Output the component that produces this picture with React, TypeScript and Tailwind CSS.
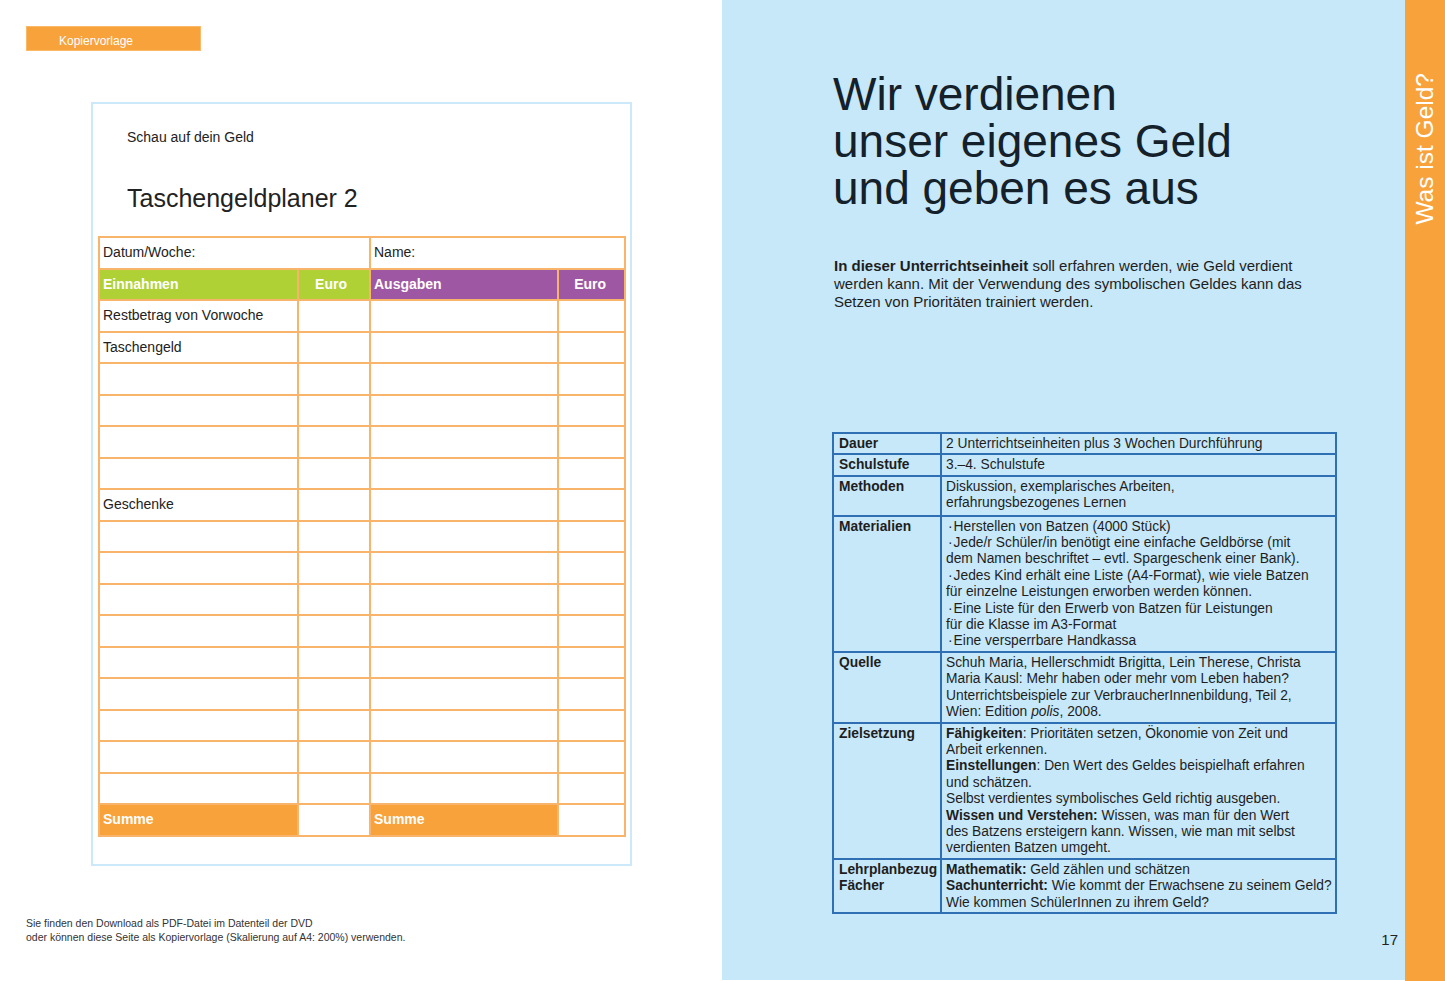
import React from "react";

const font = { fontFamily: '"Liberation Sans", Arial, sans-serif' };

function PlannerTable() {
  const rows: { label?: string }[] = [
    { label: "Restbetrag von Vorwoche" },
    { label: "Taschengeld" },
    {},
    {},
    {},
    {},
    { label: "Geschenke" },
    {},
    {},
    {},
    {},
    {},
    {},
    {},
    {},
    {},
  ];
  const td = "border-2 border-[#f9b46c] px-[3px] text-[14px] text-[#222] align-middle";
  return (
    <table className="border-collapse table-fixed ml-[5px] w-[526px]">
      <colgroup>
        <col className="w-[199px]" />
        <col className="w-[72px]" />
        <col className="w-[188px]" />
        <col className="w-[67px]" />
      </colgroup>
      <tbody>
        <tr className="h-[31.5px]">
          <td colSpan={2} className={td}>Datum/Woche:</td>
          <td colSpan={2} className={td}>Name:</td>
        </tr>
        <tr className="h-[31.5px]">
          <td className={`${td} bg-[#afd136] text-white font-bold`}>Einnahmen</td>
          <td className={`${td} bg-[#afd136] text-white font-bold text-right pr-[22px]`}>Euro</td>
          <td className={`${td} bg-[#9e58a3] text-white font-bold`}>Ausgaben</td>
          <td className={`${td} bg-[#9e58a3] text-white font-bold text-right pr-[18px]`}>Euro</td>
        </tr>
        {rows.map((r, i) => (
          <tr key={i} className="h-[31.5px]">
            <td className={td}>{r.label ?? ""}</td>
            <td className={td}></td>
            <td className={td}></td>
            <td className={td}></td>
          </tr>
        ))}
        <tr className="h-[31.5px]">
          <td className={`${td} bg-[#f8a23c] text-white font-bold`}>Summe</td>
          <td className={td}></td>
          <td className={`${td} bg-[#f8a23c] text-white font-bold`}>Summe</td>
          <td className={td}></td>
        </tr>
      </tbody>
    </table>
  );
}

function InfoTable() {
  const th = "border-2 border-[#2f6fb3] align-top px-[5px] pt-[2px] pb-[1px] font-bold";
  const tdc = "border-2 border-[#2f6fb3] align-top px-[4px] pt-[2px] pb-[1px]";
  return (
    <table className="border-collapse table-fixed w-[503px] text-[13.8px] leading-[16.4px] text-[#1e1e1e]">
      <colgroup>
        <col className="w-[108px]" />
        <col className="w-[395px]" />
      </colgroup>
      <tbody>
        <tr>
          <td className={th}>Dauer</td>
          <td className={tdc}>2 Unterrichtseinheiten plus 3 Wochen Durchführung</td>
        </tr>
        <tr>
          <td className={th}>Schulstufe</td>
          <td className={tdc}>3.–4. Schulstufe</td>
        </tr>
        <tr>
          <td className={th}>Methoden</td>
          <td className={`${tdc} pb-[3px]`}>
            Diskussion, exemplarisches Arbeiten,
            <br />
            erfahrungsbezogenes Lernen
          </td>
        </tr>
        <tr>
          <td className={th}>Materialien</td>
          <td className={`${tdc} whitespace-nowrap`}>
            <span className="pl-[2px] pr-[1px]">·</span>Herstellen von Batzen (4000 Stück)
            <br />
            <span className="pl-[2px] pr-[1px]">·</span>Jede/r Schüler/in benötigt eine einfache Geldbörse (mit
            <br />
            dem Namen beschriftet – evtl. Spargeschenk einer Bank).
            <br />
            <span className="pl-[2px] pr-[1px]">·</span>Jedes Kind erhält eine Liste (A4-Format), wie viele Batzen
            <br />
            für einzelne Leistungen erworben werden können.
            <br />
            <span className="pl-[2px] pr-[1px]">·</span>Eine Liste für den Erwerb von Batzen für Leistungen
            <br />
            für die Klasse im A3-Format
            <br />
            <span className="pl-[2px] pr-[1px]">·</span>Eine versperrbare Handkassa
          </td>
        </tr>
        <tr>
          <td className={th}>Quelle</td>
          <td className={`${tdc} whitespace-nowrap`}>
            Schuh Maria, Hellerschmidt Brigitta, Lein Therese, Christa
            <br />
            Maria Kausl: Mehr haben oder mehr vom Leben haben?
            <br />
            Unterrichtsbeispiele zur VerbraucherInnenbildung, Teil 2,
            <br />
            Wien: Edition <i>polis</i>, 2008.
          </td>
        </tr>
        <tr>
          <td className={th}>Zielsetzung</td>
          <td className={`${tdc} whitespace-nowrap`}>
            <b>Fähigkeiten</b>: Prioritäten setzen, Ökonomie von Zeit und
            <br />
            Arbeit erkennen.
            <br />
            <b>Einstellungen</b>: Den Wert des Geldes beispielhaft erfahren
            <br />
            und schätzen.
            <br />
            Selbst verdientes symbolisches Geld richtig ausgeben.
            <br />
            <b>Wissen und Verstehen:</b> Wissen, was man für den Wert
            <br />
            des Batzens ersteigern kann. Wissen, wie man mit selbst
            <br />
            verdienten Batzen umgeht.
          </td>
        </tr>
        <tr>
          <td className={`${th} whitespace-nowrap`}>
            Lehrplanbezug
            <br />
            Fächer
          </td>
          <td className={`${tdc} whitespace-nowrap`}>
            <b>Mathematik:</b> Geld zählen und schätzen
            <br />
            <b>Sachunterricht:</b> Wie kommt der Erwachsene zu seinem Geld?
            <br />
            Wie kommen SchülerInnen zu ihrem Geld?
          </td>
        </tr>
      </tbody>
    </table>
  );
}

export default function App() {
  return (
    <div className="w-[1445px] h-[981px] flex overflow-hidden bg-white" style={font}>
      {/* Left page */}
      <div className="w-[722px] shrink-0 bg-white flex flex-col pt-[26px] pl-[26px]">
        <div className="w-[175px] h-[25px] bg-[#f8a23c] border border-[#fbb868] pl-[32px] pt-[7px] text-[12px] leading-[14px] text-white">
          Kopiervorlage
        </div>
        <div className="mt-[51px] ml-[65px] w-[541px] h-[764px] border-2 border-[#cbe9f9] flex flex-col">
          <div className="pl-[34px] pt-[23px] text-[14px] text-[#222]">Schau auf dein Geld</div>
          <div className="pl-[34px] pt-[35px] text-[25px] text-[#222] leading-[30px]">Taschengeldplaner 2</div>
          <div className="pt-[23px]">
            <PlannerTable />
          </div>
        </div>
        <div className="mt-[50px] text-[10.5px] leading-[14px] text-[#333]">
          <div>Sie finden den Download als PDF-Datei im Datenteil der DVD</div>
          <div>oder können diese Seite als Kopiervorlage (Skalierung auf A4: 200%) verwenden.</div>
        </div>
      </div>

      {/* Right page */}
      <div className="w-[683px] shrink-0 bg-[#c6e8f9] flex flex-col h-[980px]">
        <h1 className="pl-[111px] pt-[71px] text-[46px] leading-[47px] text-[#14202a] font-normal">
          <div>Wir verdienen</div>
          <div>unser eigenes Geld</div>
          <div>und geben es aus</div>
        </h1>
        <div className="pl-[112px] pt-[45px] text-[15px] leading-[18px] text-[#1e1e1e] whitespace-nowrap">
          <div>
            <b>In dieser Unterrichtseinheit</b> soll erfahren werden, wie Geld verdient
          </div>
          <div>werden kann. Mit der Verwendung des symbolischen Geldes kann das</div>
          <div>Setzen von Prioritäten trainiert werden.</div>
        </div>
        <div className="pl-[110px] pt-[121px]">
          <InfoTable />
        </div>
        <div className="pt-[15px] pr-[7px] text-right text-[15px] text-[#222]">17</div>
      </div>

      {/* Orange strip */}
      <div className="w-[40px] shrink-0 bg-[#f8a23c] flex flex-col items-center pt-[73px]">
        <div className="[writing-mode:vertical-rl] rotate-180 text-[24.5px] text-white leading-[24px]">
          Was ist Geld?
        </div>
      </div>
    </div>
  );
}
